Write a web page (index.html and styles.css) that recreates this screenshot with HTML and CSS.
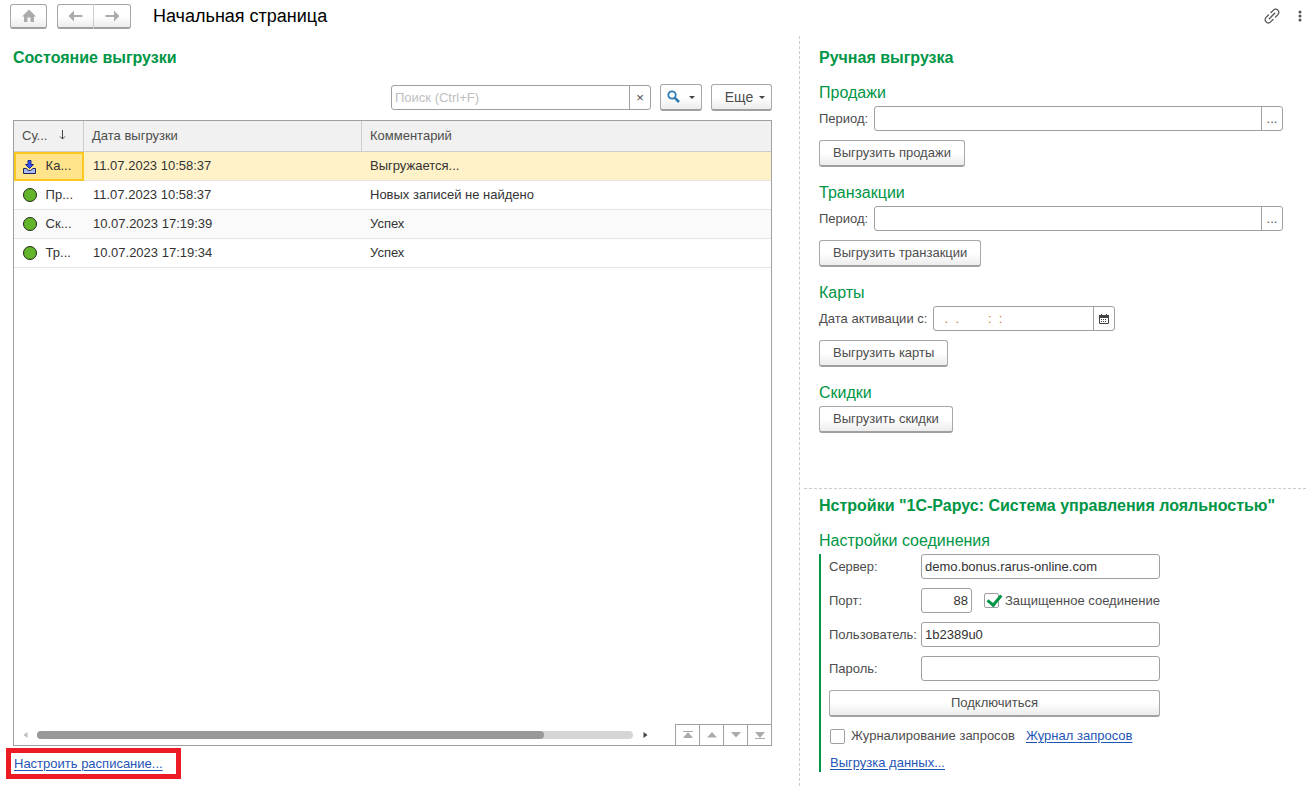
FILE: index.html
```html
<!DOCTYPE html>
<html lang="ru">
<head>
    <meta charset="UTF-8">
    <meta name="viewport" content="width=device-width, initial-scale=1.0">
    <title>Начальная страница</title>
    <link rel="stylesheet" href="styles.css">
</head>
<body>

<header>
    <button type="button" class="btn nav-btn home" aria-label="Домой">
        <svg width="16" height="14" viewBox="0 0 16 14"><path d="M8 0.5L15 7.5H13V13H9.5V8.5H6.5V13H3V7.5H1Z" fill="#ababab"/></svg>
    </button>
    <div class="nav-group">
        <button type="button" class="btn nav-btn" aria-label="Назад">
            <svg width="15" height="12" viewBox="0 0 15 12"><path d="M0.5 6L6 0.5V5H14.5V7H6V11.5Z" fill="#ababab"/></svg>
        </button>
        <button type="button" class="btn nav-btn" aria-label="Вперед">
            <svg width="15" height="12" viewBox="0 0 15 12"><path d="M14.5 6L9 0.5V5H0.5V7H9V11.5Z" fill="#ababab"/></svg>
        </button>
    </div>
    <h1>Начальная страница</h1>
    <button type="button" class="icon-btn" aria-label="Получить ссылку">
        <svg width="16" height="16" viewBox="0 0 16 16" fill="none" stroke="#555" stroke-width="1.3" stroke-linecap="round">
            <path d="M5.3 10.7L10.7 5.3"/>
            <path d="M7 4.5L9.4 2.1A3 3 0 0 1 13.9 6.6L11.5 9"/>
            <path d="M4.5 7L2.1 9.4A3 3 0 0 0 6.6 13.9L9 11.5"/>
        </svg>
    </button>
    <button type="button" class="icon-btn" aria-label="Меню">
        <svg width="4" height="12" viewBox="0 0 4 12" fill="#555"><circle cx="2" cy="2" r="1.5"/><circle cx="2" cy="6" r="1.5"/><circle cx="2" cy="10" r="1.5"/></svg>
    </button>
</header>

<main>
    <section class="status">
        <h2>Состояние выгрузки</h2>

        <div class="toolbar">
            <div class="field search">
                <input type="text" placeholder="Поиск (Ctrl+F)" aria-label="Поиск">
                <button type="button" aria-label="Очистить">×</button>
            </div>
            <button type="button" class="btn find" aria-label="Найти">
                <svg width="14" height="14" viewBox="0 0 14 14" fill="none" stroke="#2f7ab0"><circle cx="5" cy="5" r="3.7" stroke-width="1.8"/><path d="M7.8 7.8L12 12" stroke-width="2.6"/></svg>
                <span class="caret"></span>
            </button>
            <button type="button" class="btn more">Еще <span class="caret"></span></button>
        </div>

        <div class="list">
            <table>
                <thead>
                    <tr>
                        <th class="col-entity">Су...
                            <svg width="7" height="10" viewBox="0 0 7 10" fill="none" stroke="#444"><path d="M3.5 0V9M1 6.5L3.5 9L6 6.5"/></svg>
                        </th>
                        <th class="col-date">Дата выгрузки</th>
                        <th>Комментарий</th>
                    </tr>
                </thead>
                <tbody>
                    <tr class="selected">
                        <td class="current">
                            <svg width="16" height="16" viewBox="0 0 16 16"><path d="M6 1.5H9V5.5H11.5L7.5 9.5L3.5 5.5H6Z" fill="#3350f5" stroke="#1c2a8c"/><path d="M1.5 9.5H4L6.5 11.5H8.5L11 9.5H13.5V14.5H1.5Z" fill="#a9bcf5" stroke="#1b2263"/></svg>
                            Ка...
                        </td>
                        <td>11.07.2023 10:58:37</td>
                        <td>Выгружается...</td>
                    </tr>
                    <tr>
                        <td><svg width="16" height="16" viewBox="0 0 16 16"><circle cx="8" cy="8" r="6.5" fill="#63b52c" stroke="#1d2a16"/></svg> Пр...</td>
                        <td>11.07.2023 10:58:37</td>
                        <td>Новых записей не найдено</td>
                    </tr>
                    <tr>
                        <td><svg width="16" height="16" viewBox="0 0 16 16"><circle cx="8" cy="8" r="6.5" fill="#63b52c" stroke="#1d2a16"/></svg> Ск...</td>
                        <td>10.07.2023 17:19:39</td>
                        <td>Успех</td>
                    </tr>
                    <tr>
                        <td><svg width="16" height="16" viewBox="0 0 16 16"><circle cx="8" cy="8" r="6.5" fill="#63b52c" stroke="#1d2a16"/></svg> Тр...</td>
                        <td>10.07.2023 17:19:34</td>
                        <td>Успех</td>
                    </tr>
                </tbody>
            </table>
            <div class="list-footer">
                <svg width="5" height="8" viewBox="0 0 5 8"><path d="M4.5 1V7L0.5 4Z" fill="#bbb"/></svg>
                <div class="track"><div class="thumb"></div></div>
                <svg width="5" height="8" viewBox="0 0 5 8"><path d="M0.5 1V7L4.5 4Z" fill="#444"/></svg>
                <div class="pager">
                    <button type="button" aria-label="В начало"><svg width="10" height="8" viewBox="0 0 10 8" fill="#ababab"><path d="M0 0H10V1H0ZM5 1L10 7H0Z"/></svg></button>
                    <button type="button" aria-label="Вверх"><svg width="10" height="6" viewBox="0 0 10 6" fill="#ababab"><path d="M5 0L10 5.5H0Z"/></svg></button>
                    <button type="button" aria-label="Вниз"><svg width="10" height="6" viewBox="0 0 10 6" fill="#ababab"><path d="M5 5.5L10 0H0Z"/></svg></button>
                    <button type="button" aria-label="В конец"><svg width="10" height="8" viewBox="0 0 10 8" fill="#ababab"><path d="M0 7H10V8H0ZM5 7L10 1H0Z"/></svg></button>
                </div>
            </div>
        </div>

        <div class="highlight"><a href="#">Настроить расписание...</a></div>
    </section>

    <div class="side">
        <section class="manual">
            <h2>Ручная выгрузка</h2>

            <div class="group">
                <h3>Продажи</h3>
                <div class="row">
                    <label for="salesPeriod">Период:</label>
                    <div class="field wide">
                        <input type="text" id="salesPeriod">
                        <button type="button" aria-label="Выбрать период">...</button>
                    </div>
                </div>
                <button type="button" class="btn">Выгрузить продажи</button>
            </div>

            <div class="group">
                <h3>Транзакции</h3>
                <div class="row">
                    <label for="transPeriod">Период:</label>
                    <div class="field wide">
                        <input type="text" id="transPeriod">
                        <button type="button" aria-label="Выбрать период">...</button>
                    </div>
                </div>
                <button type="button" class="btn">Выгрузить транзакции</button>
            </div>

            <div class="group">
                <h3>Карты</h3>
                <div class="row">
                    <label for="cardsDate">Дата активации с:</label>
                    <div class="field date">
                        <input type="text" id="cardsDate" value="  .  .        :  :">
                        <button type="button" aria-label="Календарь">
                            <svg width="10" height="10" viewBox="0 0 10 10"><path d="M0.5 1.5H9.5V9.5H0.5Z" fill="none" stroke="#444"/><path d="M0 1H10V4H0ZM2 0H3V1H2ZM7 0H8V1H7Z" fill="#444"/><path d="M2 5.5H8M2 7.5H8" stroke="#444" stroke-dasharray="1 1"/></svg>
                        </button>
                    </div>
                </div>
                <button type="button" class="btn">Выгрузить карты</button>
            </div>

            <div class="group">
                <h3>Скидки</h3>
                <button type="button" class="btn">Выгрузить скидки</button>
            </div>
        </section>

        <section class="settings">
            <h2>Нстройки "1С-Рарус: Система управления лояльностью"</h2>
            <h3>Настройки соединения</h3>
            <form class="connection">
                <label for="server">Сервер:</label>
                <div class="field"><input type="text" id="server" value="demo.bonus.rarus-online.com"></div>

                <label for="port">Порт:</label>
                <div class="port-row">
                    <div class="field port"><input type="text" id="port" value="88"></div>
                    <label class="check">
                        <input type="checkbox" checked>
                        Защищенное соединение
                    </label>
                </div>

                <label for="user">Пользователь:</label>
                <div class="field"><input type="text" id="user" value="1b2389u0"></div>

                <label for="password">Пароль:</label>
                <div class="field"><input type="password" id="password"></div>

                <button type="button" class="btn full">Подключиться</button>

                <div class="full log-row">
                    <label class="check"><input type="checkbox"> Журналирование запросов</label>
                    <a href="#">Журнал запросов</a>
                </div>
                <div class="full export"><a href="#">Выгрузка данных...</a></div>
            </form>
        </section>
    </div>
</main>

</body>
</html>
```
FILE: styles.css
```css
* {
    box-sizing: border-box;
}

body {
    font-family: Arial, "Liberation Sans", sans-serif;
    font-size: 13px;
    line-height: 16px;
    margin: 0;
    min-height: 100vh;
    display: flex;
    flex-direction: column;
    color: #4d4d4d;
    background-color: white;
}

input, button {
    font: inherit;
    color: inherit;
    margin: 0;
}

button {
    cursor: pointer;
}

svg {
    display: block;
    flex: none;
}

a {
    color: #1f55b5;
    text-underline-offset: 2px;
}

h1, h2, h3 {
    margin: 0;
}

h1 {
    flex: 1;
    margin-left: 22px;
    font-size: 18px;
    font-weight: normal;
    color: black;
}

h2 {
    margin-bottom: 12px;
    font-size: 16px;
    line-height: 20px;
    color: #009646;
}

h3 {
    font-size: 16px;
    line-height: 26px;
    font-weight: normal;
    color: #009646;
}

header {
    display: flex;
    align-items: center;
    height: 36px;
    padding: 0 4px 4px 10px;
}

/* Buttons */
.btn {
    display: inline-flex;
    align-items: center;
    justify-content: center;
    height: 27px;
    padding: 0 13px;
    border: 1px solid #a8a8a8;
    border-bottom: 2px solid #a0a0a0;
    border-radius: 3px;
    background: linear-gradient(#fff 50%, #ececec);
}

.btn:hover {
    background: #f2f2f2;
}

.nav-btn {
    width: 37px;
    height: 25px;
    padding: 0;
}

.nav-group {
    display: flex;
    margin-left: 10px;
}

.nav-group .btn:first-child {
    border-radius: 3px 0 0 3px;
    border-right-color: #ccc;
}

.nav-group .btn:last-child {
    border-left: 0;
    border-radius: 0 3px 3px 0;
}

.icon-btn {
    display: flex;
    padding: 0;
    border: none;
    background: none;
}

.icon-btn + .icon-btn {
    margin-left: 18px;
}

.caret {
    border: 3px solid transparent;
    border-top-color: #444;
    border-bottom: 0;
}

/* Fields */
.field {
    display: flex;
    height: 25px;
    border: 1px solid #a0a0a0;
    border-radius: 3px;
    background-color: white;
}

.field input {
    flex: 1;
    min-width: 0;
    padding: 0 3px;
    border: none;
    outline: none;
    background: none;
    color: #333;
}

.field input::placeholder {
    color: #c0c0c0;
}

.field button {
    display: flex;
    align-items: center;
    justify-content: center;
    width: 21px;
    padding: 0;
    border: none;
    border-left: 1px solid #a0a0a0;
    background: none;
}

/* Layout */
main {
    flex: 1;
    display: grid;
    grid-template-columns: 800fr 506fr;
}

.status {
    display: flex;
    flex-direction: column;
    padding: 12px 27px 7px 13px;
    border-right: 1px dashed #ccc;
}

.side {
    display: flex;
    flex-direction: column;
}

.toolbar {
    display: flex;
    align-items: center;
    justify-content: flex-end;
    margin: 4px 0 9px;
}

.search {
    width: 260px;
}

.find {
    gap: 8px;
    width: 42px;
    margin: 0 9px;
    padding: 0;
}

.more {
    gap: 6px;
    width: 61px;
    padding: 0 0 0 7px;
    font-size: 14px;
}

/* List */
.list {
    flex: 1;
    display: flex;
    flex-direction: column;
    justify-content: space-between;
    border: 1px solid #a0a0a0;
}

table {
    width: 100%;
    table-layout: fixed;
    border-collapse: separate;
    border-spacing: 0;
    color: #333;
}

th {
    height: 31px;
    padding: 0 8px;
    border-bottom: 1px solid #ccc;
    border-right: 1px solid #ccc;
    background-color: #f1f1f1;
    font-weight: normal;
    text-align: left;
    color: #4d4d4d;
}

th:last-child {
    border-right: none;
}

.col-entity {
    width: 70px;
}

.col-date {
    width: 278px;
}

th svg {
    display: inline-block;
    margin-left: 8px;
}

td {
    height: 29px;
    padding: 0 9px;
    border-bottom: 1px solid #e4e4e4;
    white-space: nowrap;
}

td:first-child {
    padding: 0 0 0 8px;
}

td:last-child {
    padding: 0 8px;
}

td svg {
    display: inline-block;
    margin-right: 4px;
    vertical-align: middle;
}

tbody tr:nth-child(3) {
    background-color: #fafafa;
}

.selected {
    background-color: #fff2c8;
}

.selected .current {
    padding-left: 6px;
    border: 2px solid #fac81e;
    background-color: #ffe48c;
}

.list-footer {
    display: flex;
    align-items: center;
    padding-left: 9px;
}

.track {
    flex: 1;
    height: 8px;
    margin: 0 10px 0 9px;
    border-radius: 4px;
    background-color: #d5d5d5;
}

.thumb {
    width: 85%;
    height: 8px;
    border-radius: 4px;
    background-color: #999;
}

.pager {
    display: flex;
    margin-left: 27px;
    border-top: 1px solid #a0a0a0;
}

.pager button {
    display: flex;
    align-items: center;
    justify-content: center;
    width: 24px;
    height: 20px;
    padding: 0;
    border: none;
    border-left: 1px solid #a0a0a0;
    background: none;
}

.highlight {
    align-self: flex-start;
    margin: 2px 0 0 -7px;
    padding: 3px 13px 2px 3px;
    border: 5px solid #ed1c24;
}

/* Manual export */
.manual {
    flex: 1;
    padding: 12px 23px 12px 19px;
}

.group {
    margin-bottom: 13px;
}

.row {
    display: flex;
    align-items: center;
    gap: 6px;
    margin-bottom: 9px;
}

.wide {
    flex: 1;
}

.date {
    width: 182px;
}

.date input {
    color: #c87820;
}

.group > .btn {
    display: flex;
}

/* Connection settings */
.settings {
    margin-left: 4px;
    padding: 7px 8px 14px 15px;
    border-top: 1px dashed #ccc;
}

.connection {
    display: grid;
    grid-template-columns: 92px 239px;
    row-gap: 9px;
    align-items: center;
    padding-left: 8px;
    border-left: 2px solid #009646;
}

.full {
    grid-column: 1 / -1;
}

.port-row {
    display: flex;
    justify-content: space-between;
}

.port {
    width: 51px;
}

.port input {
    text-align: right;
}

.check {
    display: flex;
    align-items: center;
    gap: 6px;
    white-space: nowrap;
}

.check input {
    appearance: none;
    width: 15px;
    height: 15px;
    margin: 0;
    border: 1px solid #a0a0a0;
    border-radius: 2px;
    background-color: white;
}

.check input:checked::after {
    content: "";
    display: block;
    width: 6px;
    height: 11px;
    margin: -2px 0 0 5px;
    border: solid #009646;
    border-width: 0 3px 3px 0;
    transform: rotate(40deg);
}

.log-row {
    display: flex;
    gap: 11px;
    padding: 2px 0 0 1px;
}

.export {
    padding: 2px 0 1px 1px;
}
```
